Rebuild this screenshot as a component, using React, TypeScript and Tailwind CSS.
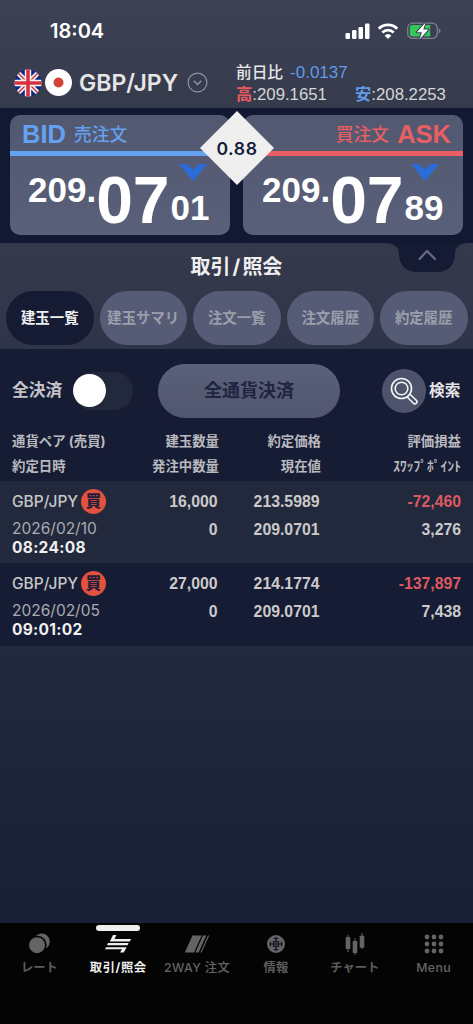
import React from 'react';

interface Position {
  pair: string;
  date: string;
  time: string;
  amount: string;
  ordered: string;
  price: string;
  current: string;
  profit: string;
  swap: string;
}

const positions: Position[] = [
  { pair: 'GBP/JPY', date: '2026/02/10', time: '08:24:08', amount: '16,000', ordered: '0', price: '213.5989', current: '209.0701', profit: '-72,460', swap: '3,276' },
  { pair: 'GBP/JPY', date: '2026/02/05', time: '09:01:02', amount: '27,000', ordered: '0', price: '214.1774', current: '209.0701', profit: '-137,897', swap: '7,438' },
];

const tabs = ['建玉一覧', '建玉サマリ', '注文一覧', '注文履歴', '約定履歴'];

const StatusBar: React.FC = () => (
  <div className="flex h-[62px] items-center justify-between pr-8 pl-[50px]">
    <span className="text-[20px] leading-6 font-semibold text-white">18:04</span>
    <div className="flex items-center">
      <svg width="26" height="18" viewBox="0 0 26 18" fill="#fff">
        <rect x="0.5" y="11" width="4.5" height="6" rx="1.2" />
        <rect x="7" y="8" width="4.5" height="9" rx="1.2" />
        <rect x="13.5" y="5" width="4.5" height="12" rx="1.2" />
        <rect x="20" y="1.5" width="4.5" height="15.5" rx="1.2" />
      </svg>
      <svg className="ml-[6px]" width="22" height="18" viewBox="0 0 22 18" fill="none" stroke="#fff" strokeWidth="2.8">
        <path d="M1.8 6.7a13.2 13.2 0 0 1 18.4 0" />
        <path d="M5.3 10.5a8.2 8.2 0 0 1 11.4 0" />
        <path d="M11 17l-3.4-3.5a5 5 0 0 1 6.8 0z" fill="#fff" stroke="none" />
      </svg>
      <svg className="ml-[8px]" width="34" height="18" viewBox="0 0 34 18">
        <rect x="0.7" y="1.2" width="29.6" height="15.2" rx="5" fill="none" stroke="#7d818e" strokeWidth="1.3" />
        <path d="M31.8 6.2c2.2.6 2.2 4.6 0 5.2z" fill="#7d818e" />
        <path d="M6 3.1h17.2v11.4H6a3.2 3.2 0 0 1-3.2-3.2V6.3A3.2 3.2 0 0 1 6 3.1z" fill="#34c759" />
        <path d="M18.8 0.2l-9 10h5.2l-2.6 7.4 9-10h-5.2z" fill="#fff" stroke="#3a3f51" strokeWidth="2" paintOrder="stroke" strokeLinejoin="round" />
      </svg>
    </div>
  </div>
);

const UkFlag: React.FC = () => (
  <svg width="28" height="28" viewBox="0 0 28 28">
    <clipPath id="uk"><circle cx="14" cy="14" r="13.5" /></clipPath>
    <g clipPath="url(#uk)">
      <rect width="28" height="28" fill="#0b2a84" />
      <path d="M2 2l24 24M26 2L2 26" stroke="#f4f4f4" strokeWidth="4.6" />
      <path d="M2 2l24 24M26 2L2 26" stroke="#d8303e" strokeWidth="1.5" />
      <path d="M14 0v28M0 14h28" stroke="#f4f4f4" strokeWidth="6.4" />
      <path d="M14 0v28M0 14h28" stroke="#d8303e" strokeWidth="3.6" />
    </g>
  </svg>
);

const JpFlag: React.FC = () => (
  <svg className="ml-[3px]" width="27" height="27" viewBox="0 0 27 27">
    <circle cx="13.5" cy="13.5" r="13.5" fill="#fff" />
    <circle cx="13.5" cy="13.5" r="5" fill="#d2443b" />
  </svg>
);

const PairHeader: React.FC = () => (
  <div className="flex h-[46px] pl-[14px]">
    <div className="flex h-[41px] w-[222px] items-center">
      <UkFlag />
      <JpFlag />
      <span className="ml-[7px] w-[101px] text-[23px] leading-7 font-semibold whitespace-nowrap text-[#e6e6e6]">GBP/JPY</span>
      <svg className="ml-[7px]" width="21" height="21" viewBox="0 0 21 21" fill="none" stroke="#9194a0">
        <circle cx="10.5" cy="10.5" r="9.4" strokeWidth="1.2" />
        <path d="M6.7 8.8l3.8 3.8 3.8-3.8" strokeWidth="1.4" />
      </svg>
    </div>
    <div className="font-['Liberation_Sans','Noto_Sans_CJK_JP',sans-serif] text-[16.8px] text-[#d6d6d6]">
      <div className="flex h-[22px] items-center leading-[22px]">
        <span className="text-[15.7px] font-medium text-[#e6e6e6]">前日比</span>
        <span className="ml-[7px] text-[17px] text-[#619ae8]">-0.0137</span>
      </div>
      <div className="flex h-[20px] items-center leading-[20px]">
        <span className="w-[92px] whitespace-nowrap"><span className="text-[16.3px] font-bold text-[#e85b60]">高</span>:209.1651</span>
        <span className="ml-[27px] whitespace-nowrap"><span className="text-[16.3px] font-bold text-[#619ae8]">安</span>:208.2253</span>
      </div>
    </div>
  </div>
);

interface PriceCardProps {
  side: 'bid' | 'ask';
  pips: string;
}

const PriceCard: React.FC<PriceCardProps> = ({ side, pips }) => {
  const bid = side === 'bid';
  return (
    <div className="h-[120px] w-[220px] rounded-[10px] bg-linear-to-b from-[#51586f] to-[#5a607a] font-['Liberation_Sans','Noto_Sans_CJK_JP',sans-serif]">
      <div className={`flex h-[41px] items-center border-b-[5px] pt-[2px] ${bid ? 'border-[#65a1f3] pl-[12px] text-[#65a1f3]' : 'flex-row-reverse border-[#e85f63] pr-[12px] text-[#e85f63]'}`}>
        <span className="text-[25.5px] leading-8 font-bold">{bid ? 'BID' : 'ASK'}</span>
        <span className={`pt-px text-[17.8px] leading-8 font-medium ${bid ? 'ml-[8px]' : 'mr-[8px]'}`}>{bid ? '売注文' : '買注文'}</span>
      </div>
      <div className={`relative flex items-start font-bold text-white ${bid ? 'pl-[18px]' : 'pl-[19px]'}`}>
        <span className="pt-[16px] text-[35px] leading-none">209.</span>
        <span className="pt-[11px] text-[66px] leading-none">07</span>
        <span className="pt-[34px] pl-px text-[35px] leading-none">{pips}</span>
        <svg className={`absolute top-[8px] ${bid ? 'left-[169px]' : 'left-[168px]'}`} width="28" height="17" viewBox="0 0 28 17">
          <path d="M0 0h8l6 5.5 6-5.5h8L14 17z" fill="#2a6dd8" />
        </svg>
      </div>
    </div>
  );
};

const PricePanel: React.FC = () => (
  <div className="relative flex h-[135px] justify-between bg-[#121a33] px-[10px] pt-[7px]">
    <PriceCard side="bid" pips="01" />
    <PriceCard side="ask" pips="89" />
    <div className="absolute top-[3px] left-[200px] flex h-[74px] w-[74px] items-center justify-center bg-[#efefef] [clip-path:polygon(50%_0,100%_50%,50%_100%,0_50%)]">
      <span className="pt-px text-[17.6px] leading-6 font-semibold tracking-[0.6px] text-[#151b38]">0.88</span>
    </div>
  </div>
);

const SectionTabs: React.FC = () => (
  <div className="relative h-[106px] bg-linear-to-b from-[#35394c] to-[#2f3549]">
    <h1 className="pt-[10px] text-center text-[20px] leading-7 font-bold text-[#efefef]">
      取引<span className="px-[2px]">/</span>照会
    </h1>
    <div className="mt-[10px] flex gap-[6px] pl-[6px]">
      {tabs.map((tab, i) => (
        <button
          key={tab}
          className={`h-[54px] w-[87.5px] rounded-[27px] text-[14.4px] font-bold whitespace-nowrap ${i === 0 ? 'bg-[#161b34] text-[#efefef]' : 'bg-[#565c75] text-[#9c9fab]'}`}
        >
          {tab}
        </button>
      ))}
    </div>
    <svg className="absolute top-0 left-[385px]" width="84" height="30" viewBox="0 0 84 30" fill="none">
      <path d="M0 0C9 0 14 4 14 11C14 22 21 29 32 29H52C63 29 70 22 70 11C70 4 75 0 84 0z" fill="#161b34" />
      <path d="M34.5 16l7.500-8 8 8" stroke="#666c85" strokeWidth="2.2" strokeLinecap="round" />
    </svg>
  </div>
);

const Actions: React.FC = () => (
  <div className="flex h-[83px] items-center pl-[12px]">
    <span className="w-[61px] pt-px text-[16.8px] font-bold text-[#c4c4c8]">全決済</span>
    <div className="h-[38px] w-[60px] rounded-full bg-[#23293c] pt-[2px]">
      <div className="h-[33px] w-[33px] rounded-full bg-white" />
    </div>
    <button className="ml-[25px] h-[54px] w-[182px] rounded-[27px] bg-linear-to-b from-[#5b617a] to-[#50566d] text-[18px] font-bold text-[#1f2440]">全通貨決済</button>
    <button className="ml-[42px] flex items-center">
      <svg width="44" height="44" viewBox="0 0 44 44" fill="none" stroke="#f4f4f6" strokeWidth="1.6">
        <circle cx="22" cy="22" r="22" fill="#4d536b" stroke="none" />
        <circle cx="19.5" cy="19.5" r="10" />
        <circle cx="19.5" cy="19.5" r="6.3" />
        <path d="M25.2 28l6.2 6.2a2.05 2.05 0 0 0 2.9-2.9L28 25.2" />
      </svg>
      <span className="ml-[3px] pt-px text-[15.700px] font-bold text-[#e4e4e6]">検索</span>
    </button>
  </div>
);

const TableHead: React.FC = () => (
  <div className="-mt-[3px] grid h-[52px] grid-cols-[108px_99px_102px_140px] content-start pl-[12px] text-right text-[13.4px] leading-[24.5px] font-bold text-[#b9b9be]">
    <span className="text-left whitespace-nowrap">通貨ペア (売買)</span>
    <span>建玉数量</span>
    <span>約定価格</span>
    <span>評価損益</span>
    <span className="text-left">約定日時</span>
    <span>発注中数量</span>
    <span>現在値</span>
    <span className="tracking-[0.1px] whitespace-nowrap">ｽﾜｯﾌﾟﾎﾟｲﾝﾄ</span>
  </div>
);

const PositionRow: React.FC<{ position: Position }> = ({ position }) => (
  <div className="grid h-[82.3px] grid-cols-[108px_97.5px_102px_141.5px] pt-[7px] pl-[12px] odd:bg-[#23293d] even:bg-[#171c35]">
    <div className="whitespace-nowrap">
      <div className="flex h-[27px] items-center">
        <span className="w-[69px] text-[15.5px] font-medium text-[#c6c6c6]">{position.pair}</span>
        <span className="flex size-[25px] items-center justify-center rounded-full bg-[#e4513f] text-[15.5px] leading-none font-black text-[#23203a]">買</span>
      </div>
      <div className="h-[24px] text-[15.5px] leading-[27px] text-[#a9abb0]">{position.date}</div>
      <div className="text-[15.5px] leading-[17px] font-bold tracking-[0.3px] text-[#efefef]">{position.time}</div>
    </div>
    {[
      [position.amount, position.ordered],
      [position.price, position.current],
      [position.profit, position.swap],
    ].map(([top, bottom]) => (
      <div key={top} className="text-right font-['Liberation_Sans',sans-serif] text-[15.8px] leading-[27.5px] font-bold text-[#cacaca]">
        <div className={top.startsWith('-') ? 'text-[#dc595f]' : ''}>{top}</div>
        <div>{bottom}</div>
      </div>
    ))}
  </div>
);

const navItems: { label: string; icon: React.ReactNode }[] = [
  {
    label: 'レート',
    icon: (
      <>
        <circle cx="16.8" cy="9.5" r="8" />
        <circle cx="12.5" cy="13" r="9.2" fill="#050505" />
        <circle cx="12" cy="13.2" r="8" />
      </>
    ),
  },
  {
    label: '取引/照会',
    icon: <path d="M9 3h3.5l-2 4H27l-1.2 2.5H5.8zM4 11h20.6l-1 2.300H3zM2 15.200h20.700l-3 5.300H16l2-3.200H1z" />,
  },
  {
    label: '2WAY 注文',
    icon: <path d="M9.5 3.5h9.2L11 20.5H1.8zM20 3.500h3.200L15.600 20.500h-3.200zM25 3.500h1.300L18.600 20.500h-1.300z" />,
  },
  {
    label: '情報',
    icon: (
      <>
        <circle cx="14" cy="12" r="9" />
        <path d="M14 5v14M7 12h14M11.800 6.500h4.400M11.800 17.500h4.400M8.500 9.800v4.400M19.500 9.800v4.400M10.800 9.500h6.400M10.800 14.500h6.400M11.500 9v6M16.500 9v6" stroke="#121522" strokeWidth="1.200" />
      </>
    ),
  },
  {
    label: 'チャート',
    icon: (
      <>
        <path d="M6.500 3h1v17h-1zM13.500 6h1v17h-1zM20.500 1h1v16h-1z" />
        <rect x="4.700" y="5" width="4.600" height="12" rx="0.500" />
        <rect x="11.700" y="9" width="4.600" height="12" rx="0.500" />
        <rect x="18.700" y="3.700" width="4.600" height="12" rx="0.500" />
      </>
    ),
  },
  {
    label: 'Menu',
    icon: [5, 12, 19].map((y) => [7, 14, 21].map((x) => <circle key={`${x}-${y}`} cx={x} cy={y} r="2.400" />)),
  },
];

const BottomNav: React.FC = () => (
  <nav className="grid h-[101px] grid-cols-6 bg-[#040404]">
    {navItems.map((item, i) => (
      <div key={item.label} className={`flex flex-col items-center pt-[2px] ${i === 1 ? 'text-[#efefef]' : 'text-[#646464]'}`}>
        <div className={`h-[6px] w-[44px] rounded-full ${i === 1 ? 'bg-[#efefef]' : ''}`} />
        <svg className="mt-px" width="28" height="24" viewBox="0 0 28 24" fill="currentColor">{item.icon}</svg>
        <span className={`mt-[2px] text-[12.300px] leading-5 font-bold whitespace-nowrap ${i === 1 ? 'tracking-[0.600px]' : /^[2M]/.test(item.label) ? 'font-medium tracking-[0.400px]' : 'text-[#5c5c5c]'}`}>
          {item.label}
        </span>
      </div>
    ))}
  </nav>
);

const App: React.FC = () => {
  return (
    <div className="flex h-[1024px] w-[473px] flex-col overflow-hidden bg-[#171c35] font-['Inter','Noto_Sans_CJK_JP',sans-serif]">
      <header className="h-[108px] shrink-0 bg-linear-to-b from-[#3d4155] to-[#363b4c]">
        <StatusBar />
        <PairHeader />
      </header>
      <PricePanel />
      <SectionTabs />
      <Actions />
      <TableHead />
      <div>
        {positions.map((position) => (
          <PositionRow key={position.time} position={position} />
        ))}
      </div>
      <div className="grow bg-linear-to-b from-[#23293d] to-[#182037]" />
      <BottomNav />
    </div>
  );
};

export default App;
